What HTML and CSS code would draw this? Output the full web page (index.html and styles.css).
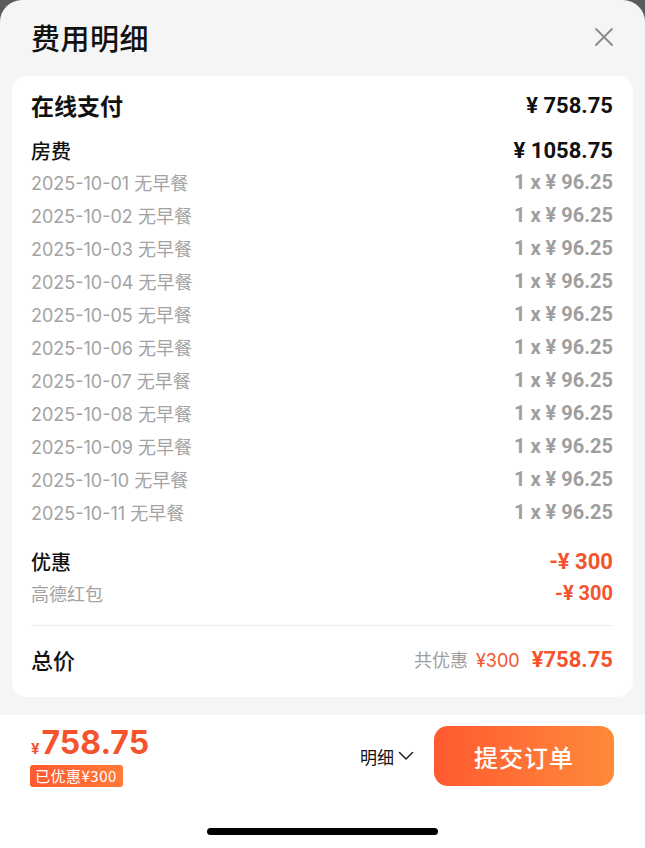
FILE: index.html
```html
<!DOCTYPE html>
<html>

<head>
    <meta charset="utf-8">
    <title>费用明细</title>
    <link rel="stylesheet" href="styles.css">
</head>

<body>
    <div class="sheet">
        <div class="sheet-head">
            <h1 class="title">费用明细</h1>
            <svg class="close" width="20" height="20" viewBox="0 0 20 20">
                <path d="M2 2 L18 18 M18 2 L2 18" stroke="#8a8a8a" stroke-width="1.8" stroke-linecap="round" fill="none"/>
            </svg>
        </div>

        <div class="card">
            <div class="row head big">
                <span>在线支付</span>
                <span class="num">¥ 758.75</span>
            </div>

            <div class="row head sub">
                <span>房费</span>
                <span class="num">¥ 1058.75</span>
            </div>
            <div class="row detail"><span class="date">2025-10-01 无早餐</span><span class="num">1 x ¥ 96.25</span></div>
            <div class="row detail"><span class="date">2025-10-02 无早餐</span><span class="num">1 x ¥ 96.25</span></div>
            <div class="row detail"><span class="date">2025-10-03 无早餐</span><span class="num">1 x ¥ 96.25</span></div>
            <div class="row detail"><span class="date">2025-10-04 无早餐</span><span class="num">1 x ¥ 96.25</span></div>
            <div class="row detail"><span class="date">2025-10-05 无早餐</span><span class="num">1 x ¥ 96.25</span></div>
            <div class="row detail"><span class="date">2025-10-06 无早餐</span><span class="num">1 x ¥ 96.25</span></div>
            <div class="row detail"><span class="date">2025-10-07 无早餐</span><span class="num">1 x ¥ 96.25</span></div>
            <div class="row detail"><span class="date">2025-10-08 无早餐</span><span class="num">1 x ¥ 96.25</span></div>
            <div class="row detail"><span class="date">2025-10-09 无早餐</span><span class="num">1 x ¥ 96.25</span></div>
            <div class="row detail"><span class="date">2025-10-10 无早餐</span><span class="num">1 x ¥ 96.25</span></div>
            <div class="row detail"><span class="date">2025-10-11 无早餐</span><span class="num">1 x ¥ 96.25</span></div>

            <div class="row head sub discount">
                <span>优惠</span>
                <span class="num orange">-¥ 300</span>
            </div>
            <div class="row detail">
                <span>高德红包</span>
                <span class="num orange">-¥ 300</span>
            </div>

            <div class="divider"></div>

            <div class="row head total">
                <span>总价</span>
                <span class="total-right">
                    <span class="saved">共优惠</span>
                    <span class="saved-amount">¥300</span>
                    <span class="num orange">¥758.75</span>
                </span>
            </div>
        </div>

        <div class="bottom-bar">
            <div class="bar-main">
                <div class="pay">
                    <div class="pay-price"><span class="yen">¥</span>758.75</div>
                    <span class="pay-tag">已优惠¥300</span>
                </div>
                <div class="bar-actions">
                    <span class="detail-toggle">明细
                        <svg width="16" height="10" viewBox="0 0 16 10">
                            <path d="M1.5 1.5 L8 8 L14.5 1.5" stroke="#222" stroke-width="1.5" fill="none" stroke-linecap="round" stroke-linejoin="round"/>
                        </svg>
                    </span>
                    <button class="submit">提交订单</button>
                </div>
            </div>
            <div class="home-indicator"></div>
        </div>
    </div>
</body>

</html>
```

FILE: styles.css
```css
/* page + sheet */
body {
    margin: 0;
    background: #5b5b5b;
    font-family: "Inter", "Noto Sans CJK SC", sans-serif;
    color: #111;
}

.sheet {
    height: 848px;
    background: #f5f5f5;
    border-radius: 22px 22px 0 0;
    overflow: hidden;
    display: flex;
    flex-direction: column;
}

.sheet-head {
    height: 76px;
    display: flex;
    align-items: center;
    justify-content: space-between;
    padding: 0 31px 0 31px;
    box-sizing: border-box;
}

.title {
    margin: 0;
    font-family: "Noto Sans CJK SC", sans-serif;
    font-size: 29px;
    font-weight: 500;
    letter-spacing: 0.5px;
    padding-bottom: 3px;
}

.close {
    margin-bottom: 3px;
}

/* card */
.card {
    margin: 0 12px;
    background: #fff;
    border-radius: 16px;
    padding: 14px 20px 23px 19px;
}

.row {
    display: flex;
    justify-content: space-between;
    align-items: center;
}

.row.head {
    height: 30px;
    font-family: "Noto Sans CJK SC", sans-serif;
    font-weight: 500;
}

.row.big {
    font-size: 23px;
    font-weight: 700;
}

.row.sub {
    font-size: 20px;
    margin-top: 15px;
}

.row.discount {
    margin-top: 18px;
}

.row.detail {
    height: 33px;
    font-size: 18px;
    color: #a3a3a3;
    font-family: "Noto Sans CJK SC", sans-serif;
}

.date {
    font-family: "Inter", "Noto Sans CJK SC", sans-serif;
}

.num {
    font-family: Roboto, "Noto Sans CJK SC", sans-serif;
    font-weight: 700;
}

.row.big .num {
    font-size: 22px;
}

.row.sub .num {
    font-size: 22px;
}

.row.detail .num {
    font-size: 20px;
    color: #9e9e9e;
}

.row.detail .num.orange,
.orange {
    color: #f5532d !important;
}

.divider {
    height: 1px;
    background: #eeeeee;
    margin: 16px 0 18px;
}

.row.total {
    font-size: 22px;
}

.total-right {
    display: flex;
    align-items: baseline;
    gap: 8px;
}

.saved {
    font-size: 18px;
    font-weight: 400;
    color: #9e9e9e;
}

.saved-amount {
    font-family: "Inter", sans-serif;
    font-size: 18px;
    font-weight: 400;
    color: #f5532d;
    margin-right: 4px;
}

.total-right .num {
    font-size: 22px;
}

/* bottom bar */
.bottom-bar {
    margin-top: 18px;
    flex: 1;
    background: #fff;
    display: flex;
    flex-direction: column;
    align-items: center;
}

.bar-main {
    width: 100%;
    box-sizing: border-box;
    padding: 11px 31px 0 30px;
    display: flex;
    justify-content: space-between;
    align-items: flex-start;
}

.pay {
    display: flex;
    flex-direction: column;
    align-items: flex-start;
}

.pay-price {
    font-family: "Inter", sans-serif;
    font-weight: 700;
    font-size: 32px;
    line-height: 33px;
    color: #f5532d;
}

.yen {
    font-size: 15px;
    margin: 0 2px 0 1px;
}

.pay-tag {
    background: linear-gradient(to right, #ff5a30, #ff7a38);
    color: #fff;
    font-family: "Noto Sans CJK SC", sans-serif;
    font-size: 15px;
    line-height: 22px;
    letter-spacing: 0.5px;
    padding: 0 6px 0 5px;
    border-radius: 3px;
}

.bar-actions {
    display: flex;
    align-items: center;
    gap: 20px;
}

.detail-toggle {
    font-family: "Noto Sans CJK SC", sans-serif;
    font-size: 17px;
    color: #111;
    display: flex;
    align-items: center;
    gap: 4px;
}

.submit {
    width: 180px;
    height: 60px;
    border: none;
    border-radius: 14px;
    background: linear-gradient(to right, #ff5a30, #ff8a3a);
    color: #fff;
    font-family: "Noto Sans CJK SC", sans-serif;
    font-size: 24px;
    font-weight: 500;
    letter-spacing: 1px;
}

.home-indicator {
    margin-top: auto;
    margin-bottom: 13px;
    width: 231px;
    height: 7px;
    border-radius: 4px;
    background: #000;
}
```
